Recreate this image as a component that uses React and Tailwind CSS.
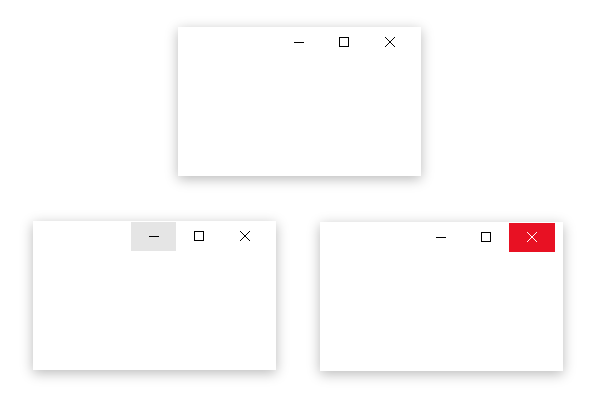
import React from 'react';

const MinIcon = () => (
  <svg width="10" height="10" viewBox="0 0 10 10" shapeRendering="crispEdges">
    <line x1="0" y1="5.5" x2="10" y2="5.5" stroke="currentColor" strokeWidth="1" />
  </svg>
);

const MaxIcon = () => (
  <svg width="10" height="10" viewBox="0 0 10 10" shapeRendering="crispEdges">
    <rect x="0.5" y="0.5" width="9" height="9" fill="none" stroke="currentColor" strokeWidth="1" />
  </svg>
);

const CloseIcon = () => (
  <svg width="10" height="10" viewBox="0 0 10 10">
    <path d="M0 0 L10 10 M10 0 L0 10" stroke="currentColor" strokeWidth="1" />
  </svg>
);

const Window = ({ hover, className = '' }) => {
  const btn = 'h-[29px] pt-[9px] pl-[18px]';
  return (
    <div className={`w-[243px] h-[149px] bg-white shadow-[0_3px_12px_rgba(0,0,0,0.28)] ${className}`}>
      <div className="flex justify-end pt-[1px] pr-[8px]">
        <div className={`${btn} w-[45px] text-black ${hover === 'min' ? 'bg-[#e5e5e5]' : ''}`}>
          <MinIcon />
        </div>
        <div className={`${btn} w-[46px] text-black ${hover === 'max' ? 'bg-[#e5e5e5]' : ''}`}>
          <MaxIcon />
        </div>
        <div className={`${btn} w-[46px] ${hover === 'close' ? 'bg-[#e81123] text-white' : 'text-black'}`}>
          <CloseIcon />
        </div>
      </div>
    </div>
  );
};

export default function App() {
  return (
    <div className="w-[597px] h-[401px] bg-white overflow-hidden">
      <div className="pt-[27px] pl-[178px]">
        <Window />
      </div>
      <div className="flex items-start mt-[45px]">
        <Window hover="min" className="ml-[33px]" />
        <Window hover="close" className="ml-[44px] mt-[1px]" />
      </div>
    </div>
  );
}
